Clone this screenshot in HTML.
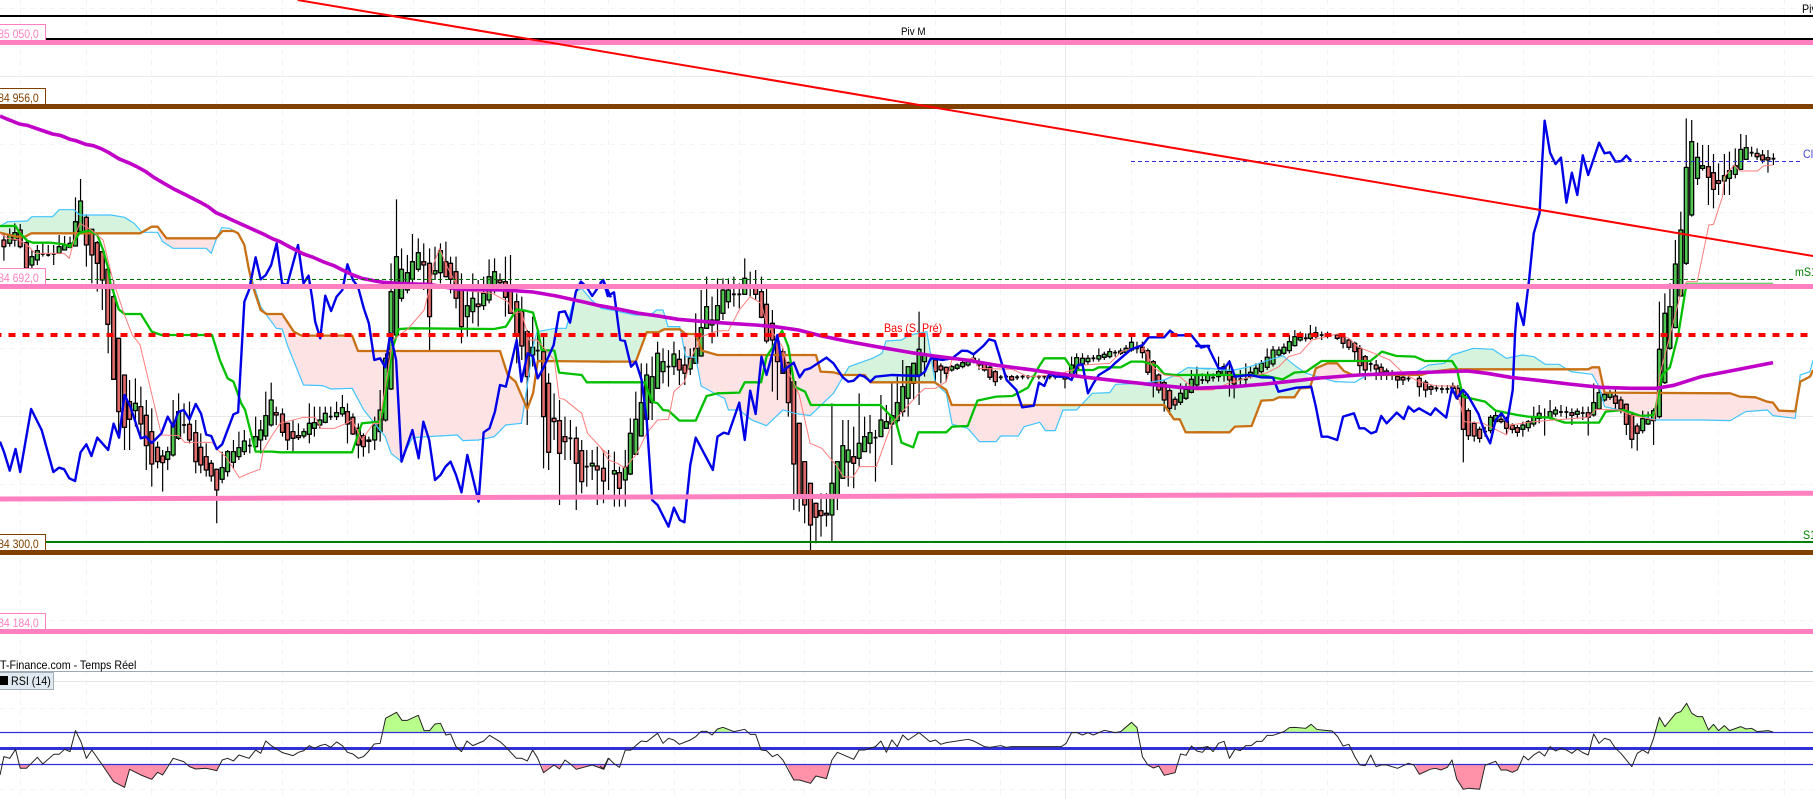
<!DOCTYPE html>
<html><head><meta charset="utf-8"><title>Chart</title>
<style>
html,body{margin:0;padding:0;background:#fff;width:1813px;height:799px;overflow:hidden}
#c{position:relative;width:1813px;height:799px;overflow:hidden;font-family:"Liberation Sans",sans-serif}
svg{position:absolute;left:0;top:0}
path,polyline,polygon{vector-effect:non-scaling-stroke;fill:none;stroke-linejoin:round}
.fg polygon{stroke:none;fill:#d6f3de}
.fp polygon{stroke:none;fill:#fde3e3}
.w{stroke:#000;stroke-width:1.2}
.d{stroke:#000;stroke-width:1.8}
.bg{fill:#50c850!important;stroke:#000;stroke-width:1.3}
.br{fill:#e46c6c!important;stroke:#000;stroke-width:1.3}
.lb{stroke:#40c4ff;stroke-width:1.2}
.or{stroke:#c87014;stroke-width:2.3}
.gr{stroke:#00c000;stroke-width:2.3}
.sa{stroke:#ff7c7c;stroke-width:1}
.bl{stroke:#0000e8;stroke-width:2.4}
.ma{stroke:#c000c8;stroke-width:3.6}
.rs{stroke:#222;stroke-width:1}
.rg polygon{stroke:none;fill:#b9ff8c}
.rp polygon{stroke:none;fill:#ff92a8}
.l{position:absolute;white-space:nowrap;line-height:14px;font-size:12px;transform:scaleX(.89);transform-origin:0 0}
.b{position:absolute;left:-2px;width:46px;height:15px;background:#fff;border:1px solid;box-sizing:content-box;overflow:hidden}
.b span{position:absolute;right:6px;top:2px;font-size:12px;line-height:14px;white-space:nowrap;transform:scaleX(.87);transform-origin:100% 0}
</style></head><body><div id="c">
<svg width="1813" height="799" viewBox="0 0 1813 799" xmlns="http://www.w3.org/2000/svg">
<!-- grid -->
<g stroke="#f3f3f3" stroke-width="1" stroke-dasharray="5 5" fill="none">
<line x1="20.5" y1="0" x2="20.5" y2="799"/><line x1="86.5" y1="0" x2="86.5" y2="799"/><line x1="151.5" y1="0" x2="151.5" y2="799"/><line x1="216.5" y1="0" x2="216.5" y2="799"/><line x1="282.5" y1="0" x2="282.5" y2="799"/><line x1="347.5" y1="0" x2="347.5" y2="799"/><line x1="413.5" y1="0" x2="413.5" y2="799"/><line x1="478.5" y1="0" x2="478.5" y2="799"/><line x1="544.5" y1="0" x2="544.5" y2="799"/><line x1="608.5" y1="0" x2="608.5" y2="799"/><line x1="674.5" y1="0" x2="674.5" y2="799"/><line x1="739.5" y1="0" x2="739.5" y2="799"/><line x1="804.5" y1="0" x2="804.5" y2="799"/><line x1="869.5" y1="0" x2="869.5" y2="799"/><line x1="935.5" y1="0" x2="935.5" y2="799"/><line x1="1000.5" y1="0" x2="1000.5" y2="799"/><line x1="1131.5" y1="0" x2="1131.5" y2="799"/><line x1="1197.5" y1="0" x2="1197.5" y2="799"/><line x1="1261.5" y1="0" x2="1261.5" y2="799"/><line x1="1327.5" y1="0" x2="1327.5" y2="799"/><line x1="1393.5" y1="0" x2="1393.5" y2="799"/><line x1="1458.5" y1="0" x2="1458.5" y2="799"/><line x1="1523.5" y1="0" x2="1523.5" y2="799"/><line x1="1589.5" y1="0" x2="1589.5" y2="799"/><line x1="1653.5" y1="0" x2="1653.5" y2="799"/><line x1="1718.5" y1="0" x2="1718.5" y2="799"/><line x1="1784.5" y1="0" x2="1784.5" y2="799"/>
<line x1="0" y1="8.5" x2="1813" y2="8.5"/><line x1="0" y1="144.5" x2="1813" y2="144.5"/><line x1="0" y1="212.5" x2="1813" y2="212.5"/><line x1="0" y1="348.5" x2="1813" y2="348.5"/><line x1="0" y1="484.5" x2="1813" y2="484.5"/><line x1="0" y1="620.5" x2="1813" y2="620.5"/><line x1="0" y1="708.5" x2="1813" y2="708.5"/><line x1="0" y1="789.5" x2="1813" y2="789.5"/>
</g>
<g stroke="#e8e8e8" stroke-width="1"><line x1="0" y1="76.5" x2="1813" y2="76.5"/><line x1="0" y1="416.5" x2="1813" y2="416.5"/><line x1="0" y1="681.5" x2="1813" y2="681.5"/><line x1="1065.5" y1="0" x2="1065.5" y2="799"/></g>
<line x1="0" y1="671.5" x2="1813" y2="671.5" stroke="#a0a8b0" stroke-width="1"/>

<!-- fills -->
<g transform="translate(0 260) scale(.3891 .3333)">
<g class="fg"><polygon points="0,-102 20,-115 70,-117 82,-130 135,-130 152,-151 190,-151 205,-135 285,-135 320,-128 345,-110 362,-82 80,-80 65,-70 40,-70 0,-82"/>
<polygon points="1370,260 1380,215 1428,205 1455,205 1480,95 1495,85 1520,120 1545,145 1568,150 1568,305 1382,303"/></g>
<g class="fp"><polygon points="405,-100 428,-65 555,-65 543,-20 530,-35 445,-35 418,-55 405,-83"/>
<polygon points="685,162 725,162 755,215 775,227 905,227 920,273 1285,273 1305,345 1325,365 1352,440 1340,490 1300,495 1270,530 1230,540 1190,542 1175,525 1100,530 1060,533 1030,603 1005,580 990,530 935,450 905,385 850,387 830,377 780,375 740,260 725,207 710,205"/></g>
</g>
<g transform="translate(600 260) scale(.3891 .3333)">
<g class="fg"><polygon points="0,143 90,165 130,165 145,150 162,150 175,200 205,200 205,208 165,208 150,217 120,217 92,305 0,305"/>
<polygon points="624,345 640,320 700,295 725,280 735,243 775,240 795,225 840,215 862,370 695,367 680,345"/>
<polygon points="1190,450 1225,450 1265,400 1310,398 1325,373 1395,370 1450,360 1480,345 1510,323 1568,327 1568,517 1505,517 1490,478 1475,478 1450,435 1170,435"/></g>
<g class="fp"><polygon points="205,208 220,222 246,222 262,272 302,285 555,285 567,335 600,337 624,345 600,400 540,467 500,460 470,450 428,497 390,480 358,450 330,450 320,415 302,405 260,378 246,292 220,290 205,200"/>
<polygon points="862,367 890,390 904,435 1170,435 1190,450 1170,512 1145,512 1130,487 1090,500 1075,528 1030,528 1018,545 975,545 945,505 905,493 890,400"/></g>
</g>
<g transform="translate(1203 260) scale(.3891 .3333)">
<g class="fg"><polygon points="-20,325 20,325 50,330 80,330 120,320 170,300 205,287 240,320 265,340 278,380 250,385 235,412 195,412 180,420 150,422 125,498 82,500 68,517 -20,517"/>
<polygon points="560,345 580,315 620,310 640,285 695,265 745,268 780,295 820,285 850,290 880,313 915,313 945,335 990,328 640,328 590,335"/></g>
<g class="fp"><polygon points="280,365 290,325 320,310 345,310 362,333 385,345 340,365 300,352"/>
<polygon points="990,328 1000,322 1018,322 1032,398 1355,400 1380,410 1420,412 1450,425 1465,428 1480,452 1522,454 1522,475 1465,467 1450,450 1395,455 1355,482 1165,480 1130,470 1080,452 1032,440 1018,380 1000,343"/></g>
</g>

<!-- candles A -->
<g transform="translate(0 260) scale(.3891 .3333)">
<path class="w" d="M10-80V2M25-95V-40M38-110V-40M52-108V-35M68-65V40M82-30V30M96-45V15M110-50V-10M124-45V-10M138-45V15M152-75V-18M166-72V-30M180-70V-35M194-188V-42M207-243V-85M222-137V20M236-90V70M250-57V95M263-25V150M278 25V280M292 60V360M305 235V520M320 345V570M333 360V570M348 355V500M362 380V535M376 420V630M390 445V680M405 545V625M418 570V695M431 560V630M445 420V590M459 400V540M473 430V520M487 425V550M503 480V640M516 520V640M530 550V650M543 600V665M557 628V790M571 575V670M585 570V650M600 540V625M614 515V600M628 510V585M642 535V580M657 470V565M670 480V580M683 395V540M697 368V500M710 440V495M726 445V530M739 505V570M753 480V575M767 490V540M781 505V535M795 430V550M808 440V530M822 440V505M836 440V490M850 440V480M865 425V480M880 405V470M893 430V550M907 460V525M921 490V595M934 520V590M948 530V580M963 470V570M977 390V545M991 280V485M1005 10V390M1019-182V230M1032-35V125M1047-15V100M1060-78V70M1075-65V35M1089-50V90M1104-35V270M1118-40V60M1132-50V70M1146-55V30M1158-10V100M1172-10V145M1186 40V250M1201 90V230M1215 40V190M1229 60V200M1243 50V150M1257-2V130M1271-5V100M1285 40V80M1299-10V170M1312-15V160M1328 100V310M1341 110V300M1355 210V495M1369 170V320M1382 210V300M1397 230V625M1410 340V630M1424 400V540M1438 420V735M1452 470V600M1466 480V600M1481 500V750M1495 540V700M1508 570V680M1522 570V660M1535 560V735"/>
<path class="d" d="M105-18h10M119-15h10M133-18h10M468 495h10M637 557h10M845 470h10M1377 272h10M1461 535h10M1503 620h10"/>
<path class="bg" d="M20-75h10V-50h-10zM33-82h10V-60h-10zM77-10h10V15h-10zM91-28h10V0h-10zM147-40h10V-20h-10zM161-45h10V-30h-10zM175-50h10V-38h-10zM189-115h10V-42h-10zM202-177h10V-85h-10zM343 430h10V452h-10zM426 575h10V598h-10zM440 490h10V585h-10zM454 455h10V535h-10zM566 623h10V658h-10zM580 575h10V635h-10zM595 575h10V607h-10zM609 563h10V590h-10zM623 543h10V575h-10zM652 530h10V560h-10zM665 510h10V540h-10zM678 467h10V528h-10zM692 420h10V495h-10zM776 515h10V528h-10zM790 490h10V523h-10zM803 488h10V505h-10zM817 480h10V495h-10zM831 460h10V487h-10zM860 458h10V470h-10zM875 443h10V462h-10zM943 540h10V544h-10zM958 495h10V540h-10zM972 450h10V515h-10zM986 295h10V480h-10zM1000 95h10V387h-10zM1014-10h10V225h-10zM1027 28h10V115h-10zM1042 38h10V90h-10zM1055 5h10V58h-10zM1070-22h10V28h-10zM1113 32h10V42h-10zM1127-28h10V38h-10zM1196 137h10V170h-10zM1210 115h10V155h-10zM1238 100h10V137h-10zM1252 50h10V120h-10zM1266 35h10V85h-10zM1364 262h10V285h-10zM1517 610h10V618h-10z"/>
<path class="br" d="M5-60h10V-40h-10zM47-90h10V-40h-10zM63-52h10V25h-10zM217-128h10V-45h-10zM231-92h10V-15h-10zM245-52h10V10h-10zM258-25h10V60h-10zM272 28h10V193h-10zM287 110h10V358h-10zM300 235h10V455h-10zM315 345h10V502h-10zM328 425h10V478h-10zM357 440h10V492h-10zM371 466h10V557h-10zM385 515h10V612h-10zM400 562h10V605h-10zM413 588h10V608h-10zM482 493h10V540h-10zM498 518h10V605h-10zM511 562h10V615h-10zM525 590h10V630h-10zM538 610h10V648h-10zM552 628h10V690h-10zM705 458h10V465h-10zM721 462h10V517h-10zM734 490h10V540h-10zM748 515h10V535h-10zM762 527h10V533h-10zM888 455h10V492h-10zM902 472h10V522h-10zM916 505h10V555h-10zM929 527h10V560h-10zM1084 5h10V15h-10zM1099 10h10V170h-10zM1141 5h10V50h-10zM1153 10h10V58h-10zM1167 35h10V115h-10zM1181 90h10V200h-10zM1224 132h10V140h-10zM1280 60h10V68h-10zM1294 65h10V112h-10zM1307 90h10V160h-10zM1323 125h10V225h-10zM1336 155h10V258h-10zM1350 215h10V350h-10zM1392 275h10V470h-10zM1405 370h10V577h-10zM1419 475h10V485h-10zM1433 482h10V580h-10zM1447 530h10V545h-10zM1476 535h10V610h-10zM1490 572h10V665h-10zM1530 618h10V630h-10z"/>
</g>
<!-- candles B -->
<g transform="translate(600 260) scale(.3891 .3333)">
<path class="w" d="M9 570V730M22 570V690M37 575V740M50 620V740M65 570V740M78 475V645M92 395V585M106 310V530M120 310V480M134 290V480M148 245V385M162 265V370M176 270V380M190 245V345M204 270V375M218 260V375M232 265V345M246 160V310M260 90V290M274 50V205M288 110V250M302 55V230M316 55V180M330 55V145M344 50V140M358 70V145M372-5V105M386 35V110M400 30V120M415 50V175M428 85V250M443 150V395M456 240V420M470 265V340M484 305V470M498 365V750M512 490V755M526 605V790M541 670V870M555 730V850M568 700V830M582 700V800M596 430V845M610 605V750M624 480V655M638 480V680M652 500V685M666 400V620M680 470V575M694 465V580M708 510V665M722 405V530M736 435V505M750 365V615M764 350V490M778 300V470M792 320V470M806 310V420M820 155V435M834 220V350M862 295V365M876 310V370M890 320V365M904 315V335M918 310V330M932 300V325M946 295V320M960 285V310M974 295V330M988 305V335M1002 315V360M1016 330V378M1030 345V360M1044 343V358M1058 345V362M1072 345V360M1086 345V358M1100 345V358M1114 345V358M1128 345V358M1142 345V358M1156 345V358M1170 345V358M1195 338V385M1212 290V360M1225 280V345M1240 280V320M1254 285V315M1268 285V305M1282 265V305M1296 275V300M1310 265V295M1324 270V290M1338 265V285M1352 255V280M1366 230V275M1380 245V280M1394 245V295M1408 265V345M1422 300V412M1436 340V400M1450 360V455M1464 385V465M1478 410V450M1492 370V435M1506 370V420M1520 330V400M1534 320V380M1548 340V372"/>
<path class="d" d="M171 320h10M339 103h10M353 103h10M703 533h10M1025 352h10M1039 350h10M1067 352h10M1081 350h10M1095 350h10M1109 350h10M1123 350h10M1137 350h10M1151 350h10M1165 350h10M1263 295h10M1319 278h10M1375 265h10M1543 360h10"/>
<path class="bg" d="M32 632h10V642h-10zM60 622h10V660h-10zM73 520h10V642h-10zM87 478h10V583h-10zM101 428h10V528h-10zM115 345h10V478h-10zM129 350h10V428h-10zM143 280h10V385h-10zM157 305h10V335h-10zM185 282h10V320h-10zM227 295h10V327h-10zM241 265h10V310h-10zM255 203h10V288h-10zM269 140h10V205h-10zM283 180h10V195h-10zM297 137h10V180h-10zM311 90h10V160h-10zM325 90h10V125h-10zM367 55h10V103h-10zM591 670h10V765h-10zM605 605h10V705h-10zM619 557h10V655h-10zM633 570h10V606h-10zM661 550h10V595h-10zM675 530h10V575h-10zM689 518h10V550h-10zM717 480h10V530h-10zM731 485h10V505h-10zM745 467h10V492h-10zM759 428h10V482h-10zM773 380h10V455h-10zM787 320h10V415h-10zM801 310h10V370h-10zM815 268h10V345h-10zM829 282h10V305h-10zM899 320h10V330h-10zM913 315h10V325h-10zM927 308h10V320h-10zM941 305h10V315h-10zM1207 315h10V345h-10zM1220 293h10V330h-10zM1235 295h10V312h-10zM1249 295h10V305h-10zM1277 287h10V297h-10zM1291 283h10V292h-10zM1305 275h10V290h-10zM1333 273h10V280h-10zM1347 265h10V277h-10zM1361 247h10V270h-10zM1487 400h10V427h-10zM1501 388h10V415h-10zM1515 358h10V397h-10zM1529 345h10V375h-10z"/>
<path class="br" d="M4 625h10V663h-10zM45 638h10V685h-10zM199 298h10V330h-10zM213 315h10V340h-10zM395 85h10V103h-10zM410 95h10V172h-10zM423 133h10V243h-10zM438 190h10V240h-10zM451 245h10V305h-10zM465 275h10V340h-10zM479 308h10V428h-10zM493 365h10V612h-10zM507 490h10V705h-10zM521 605h10V735h-10zM536 670h10V795h-10zM550 730h10V772h-10zM563 752h10V767h-10zM577 760h10V765h-10zM647 590h10V610h-10zM857 300h10V335h-10zM871 318h10V330h-10zM885 322h10V340h-10zM955 295h10V305h-10zM969 305h10V315h-10zM983 312h10V330h-10zM997 322h10V352h-10zM1011 335h10V365h-10zM1053 350h10V360h-10zM1190 345h10V357h-10zM1389 262h10V278h-10zM1403 272h10V337h-10zM1417 305h10V370h-10zM1431 345h10V390h-10zM1445 368h10V420h-10zM1459 392h10V445h-10zM1473 418h10V435h-10z"/>
</g>
<!-- candles C -->
<g transform="translate(1203 260) scale(.3891 .3333)">
<path class="w" d="M12 335V370M26 340V365M40 290V365M54 310V365M68 300V410M80 340V415M96 330V375M110 310V375M122 320V355M136 310V350M150 300V340M165 265V330M180 258V320M195 260V290M208 250V285M222 225V280M236 210V260M250 215V245M264 220V245M276 195V240M290 200V235M305 215V240M320 215V235M345 222V240M360 222V265M375 235V270M390 245V300M403 255V345M417 285V360M431 300V335M445 300V360M458 310V360M472 325V360M486 330V360M500 340V385M514 340V375M528 345V365M556 345V410M572 360V412M586 375V405M600 375V395M614 375V400M628 375V400M642 368V400M655 375V420M669 395V607M682 445V540M697 485V545M711 500V548M725 500V530M739 465V520M752 455V490M766 455V490M780 470V525M795 490V520M808 495V530M822 485V530M836 480V515M850 440V500M864 435V490M878 445V527M892 420V478M906 440V470M920 435V470M934 440V475M948 445V495M962 445V475M976 440V480M990 440V527M1004 370V470M1018 385V450M1032 395V425M1046 390V420M1060 385V450M1074 410V460M1088 430V525M1102 455V565M1116 490V572M1130 452V520M1144 455V495M1158 445V555M1173 125V475M1187 100V372M1200 70V270M1214-60V205M1228-145V110M1242-425V15M1256-420V-130M1271-352V-225M1284-345V-268M1299-345V-165M1312-318V-155M1325-290V-195M1340-318V-195M1353-325V-195M1368-335V-245M1382-378V-270M1396-375V-300M1410-340V-310M1424-335V-300M1438-330V-290M1452-330V-262M1466-320V-285"/>
<path class="d" d="M21 353h10M91 358h10M105 358h10M259 235h10M300 225h10M315 225h10M426 312h10M481 342h10M523 356h10M595 385h10M609 387h10M623 387h10M720 515h10M873 472h10M915 456h10M929 456h10M971 459h10M1405-322h10M1461-304h10"/>
<path class="bg" d="M7 345h10V362h-10zM35 335h10V350h-10zM49 320h10V345h-10zM117 337h10V350h-10zM131 325h10V345h-10zM145 310h10V335h-10zM160 292h10V322h-10zM175 270h10V312h-10zM190 270h10V285h-10zM203 262h10V280h-10zM217 245h10V272h-10zM231 230h10V257h-10zM245 232h10V240h-10zM271 222h10V235h-10zM734 472h10V512h-10zM747 467h10V485h-10zM817 495h10V508h-10zM831 485h10V503h-10zM845 472h10V492h-10zM859 460h10V475h-10zM887 455h10V473h-10zM901 450h10V462h-10zM957 454h10V463h-10zM999 428h10V465h-10zM1013 398h10V447h-10zM1027 403h10V420h-10zM1041 398h10V412h-10zM1125 476h10V512h-10zM1139 478h10V492h-10zM1153 452h10V482h-10zM1168 268h10V470h-10zM1182 160h10V368h-10zM1195 140h10V265h-10zM1209 12h10V203h-10zM1223-90h10V108h-10zM1237-278h10V10h-10zM1251-355h10V-135h-10zM1266-308h10V-245h-10zM1279-283h10V-275h-10zM1335-253h10V-237h-10zM1348-268h10V-245h-10zM1363-283h10V-257h-10zM1377-332h10V-272h-10zM1391-337h10V-302h-10z"/>
<path class="br" d="M63 335h10V360h-10zM75 350h10V372h-10zM285 218h10V230h-10zM340 225h10V235h-10zM355 230h10V250h-10zM370 240h10V262h-10zM385 250h10V275h-10zM398 265h10V317h-10zM412 290h10V330h-10zM440 315h10V327h-10zM453 322h10V338h-10zM467 333h10V342h-10zM495 350h10V360h-10zM509 352h10V360h-10zM551 355h10V380h-10zM567 367h10V390h-10zM581 380h10V388h-10zM637 378h10V385h-10zM650 385h10V410h-10zM664 405h10V508h-10zM677 452h10V527h-10zM692 490h10V528h-10zM706 508h10V535h-10zM761 478h10V485h-10zM775 483h10V505h-10zM790 495h10V508h-10zM803 503h10V517h-10zM943 458h10V466h-10zM985 458h10V472h-10zM1055 408h10V430h-10zM1069 420h10V447h-10zM1083 433h10V493h-10zM1097 465h10V538h-10zM1111 498h10V520h-10zM1294-280h10V-248h-10zM1307-262h10V-212h-10zM1320-238h10V-230h-10zM1419-320h10V-310h-10zM1433-315h10V-300h-10zM1447-307h10V-300h-10z"/>
</g>

<!-- indicator lines A -->
<g transform="translate(0 260) scale(.3891 .3333)">
<polyline class="lb" points="0,-102 20,-115 70,-117 82,-130 135,-130 152,-151 190,-151 205,-135 285,-135 320,-128 345,-110 365,-83 405,-83 418,-55 445,-35 530,-35 543,-20 555,-60 570,-97 590,-95 612,-80 628,-45 640,30 670,140 685,165 710,205 725,207 740,260 780,375 830,377 850,387 905,385 935,450 990,530 1005,580 1030,603 1060,533 1100,530 1175,525 1190,542 1230,540 1270,530 1300,495 1340,490 1352,400 1370,260 1380,215 1428,205 1455,205 1480,95 1495,85 1520,120 1545,145 1570,150"/>
<polyline class="or" points="0,-82 40,-70 65,-70 80,-80 360,-80 390,-100 405,-100 428,-65 555,-65 572,-87 600,-87 612,-80 628,-45 640,30 650,80 670,150 685,162 725,162 755,215 775,227 905,227 920,273 1285,273 1305,345 1325,365 1355,447 1370,400 1382,303 1570,305"/>
<polyline class="gr" points="0,-102 40,-102 50,-82 70,-58 85,-52 130,-52 165,-47 180,-40 195,-65 205,-82 230,-88 250,-75 265,-30 278,25 285,80 290,90 305,148 320,162 362,162 390,215 415,225 545,225 565,300 585,355 600,365 620,430 630,450 657,575 700,575 720,577 905,577 930,490 975,485 985,450 1000,330 1010,260 1025,207 1060,205 1270,207 1300,200 1328,148 1350,152 1370,158 1382,210 1392,270 1425,272 1437,338 1495,345 1508,367 1570,367"/>
<polyline class="sa" points="0,-80 20,-65 50,-60 70,-45 90,-20 165,-20 178,-5 195,-80 205,-110 235,-90 265,-60 290,60 320,165 340,225 360,255 415,525 460,527 475,547 545,547 560,570 580,590 615,653 640,640 668,628 677,570 700,525 720,490 780,472 810,472 825,505 860,505 890,490 905,480 930,540 960,490 975,490 1010,240 1050,205 1090,150 1105,80 1115,10 1130,-35 1145,10 1180,90 1265,100 1305,125 1320,160 1340,155 1360,240 1380,240 1395,260 1425,300 1437,415 1450,418 1495,460 1510,520 1550,570 1570,590"/>
<polyline class="bl" points="0,545 10,575 25,632 40,567 52,636 80,447 107,510 137,636 152,623 165,628 178,655 193,663 207,577 222,553 235,588 250,533 278,570 292,491 306,533 320,405 335,440 362,535 375,530 390,549 415,520 431,470 445,500 458,456 472,450 487,478 503,432 517,462 530,524 543,528 557,567 571,553 600,463 612,457 628,125 640,90 657,-8 670,58 683,45 697,15 711,-50 725,70 738,75 766,-45 780,70 793,47 803,120 810,185 823,235 836,107 851,153 865,110 880,90 893,13 907,60 920,80 935,145 948,190 962,300 977,295 990,322 1003,220 1018,300 1032,605 1060,510 1076,595 1088,485 1103,540 1118,660 1132,645 1145,620 1158,605 1172,645 1186,697 1201,585 1230,725 1243,517 1258,505 1272,455 1285,375 1300,380 1318,290 1328,240 1340,365 1356,280 1370,290 1382,355 1396,325 1423,255 1437,157 1452,154 1465,188 1480,95 1493,65 1507,80 1522,108 1550,60 1570,112"/>
<polyline class="ma" points="0,-432 20,-422 50,-408 70,-404 105,-390 135,-378 155,-374 180,-362 195,-358 220,-347 240,-343 260,-334 280,-322 305,-304 330,-292 350,-281 375,-265 395,-248 420,-231 450,-211 480,-194 515,-173 535,-160 555,-142 575,-132 600,-118 640,-97 680,-76 700,-64 720,-55 745,-39 780,-18 805,-8 830,5 860,18 880,30 905,44 930,55 960,62 985,67 1020,70 1060,72 1100,73 1180,88 1300,90 1370,96 1430,108 1500,126 1570,145"/>
</g>
<!-- indicator lines B -->
<g transform="translate(600 260) scale(.3891 .3333)">
<polyline class="lb" points="0,143 90,165 130,165 145,150 162,150 175,200 205,200 220,290 246,292 260,378 302,405 320,415 330,450 358,450 390,480 428,497 470,450 500,460 540,467 600,400 640,320 700,295 725,280 735,243 775,240 795,225 840,215 862,370 890,400 905,493 945,505 975,545 1018,545 1030,528 1075,528 1090,500 1130,487 1145,512 1170,512 1190,450 1225,450 1265,400 1310,398 1325,373 1395,370 1450,360 1480,345 1510,323 1568,327"/>
<polyline class="or" points="0,305 92,305 120,217 150,217 165,208 205,208 220,222 246,222 262,272 302,285 555,285 567,335 600,337 624,345 680,345 695,367 860,367 890,390 904,435 1450,435 1475,478 1490,478 1505,517 1568,517"/>
<polyline class="gr" points="0,367 115,367 134,425 148,430 162,450 176,452 204,482 246,482 274,408 302,400 358,398 372,367 414,367 428,290 442,265 468,212 484,260 500,380 527,395 542,435 720,435 760,483 775,548 805,562 818,517 890,517 905,500 945,498 970,422 1018,410 1060,408 1100,383 1128,320 1142,295 1195,295 1215,330 1225,330 1268,330 1282,322 1338,322 1365,305 1395,305 1432,318 1450,342 1480,345 1568,345"/>
<polyline class="sa" points="0,560 22,600 45,610 64,625 95,580 120,520 148,480 176,478 190,395 218,365 232,300 260,230 302,213 330,212 358,150 386,110 414,130 428,190 470,262 484,335 512,405 540,550 570,565 610,620 625,650 650,652 667,620 710,620 750,490 820,400 835,385 862,385 890,365 904,300 960,295 975,325 1060,328 1100,350 1170,345 1215,330 1240,315 1310,310 1340,275 1395,255 1420,320 1450,345 1490,350 1530,390 1568,390"/>
<polyline class="bl" points="0,70 8,60 20,108 36,97 52,240 64,243 80,320 92,305 107,360 120,480 134,720 148,735 176,800 190,743 205,780 217,787 232,615 246,533 290,630 302,530 318,518 330,522 358,428 372,540 386,392 400,462 415,290 428,345 456,225 470,335 484,320 498,308 513,352 526,330 540,325 582,293 600,310 624,352 638,365 652,362 667,345 680,350 695,365 708,350 750,345 820,348 835,335 850,295 880,300 905,295 930,272 945,273 960,283 985,258 1000,238 1015,243 1030,300 1045,360 1070,390 1085,442 1115,437 1128,368 1142,378 1155,340 1170,350 1198,350 1212,360 1228,315 1240,313 1254,400 1268,370 1282,345 1310,325 1325,308 1365,268 1395,255 1410,232 1450,232 1465,212 1480,226 1520,226 1545,263 1560,258 1568,258"/>
<polyline class="ma" points="0,137 50,148 100,160 150,168 200,178 260,184 330,190 400,195 450,200 510,210 570,228 640,245 720,262 800,278 860,288 940,300 1020,316 1100,328 1170,340 1250,352 1340,364 1420,374 1500,383 1552,385"/>
</g>
<!-- indicator lines C -->
<g transform="translate(1203 260) scale(.3891 .3333)">
<polyline class="lb" points="-20,325 20,325 50,330 80,330 120,320 170,300 205,287 240,320 265,340 300,352 340,365 390,367 430,340 545,338 580,315 620,310 640,285 695,265 745,268 780,295 820,285 850,290 880,313 915,313 945,335 1000,343 1018,380 1032,440 1080,452 1130,470 1165,480 1250,480 1280,480 1355,482 1395,455 1450,450 1465,467 1522,475 1535,345 1560,335 1568,300"/>
<polyline class="or" points="-20,517 68,517 82,500 125,498 150,422 180,420 195,412 235,412 250,385 275,383 290,325 320,310 345,310 362,333 385,345 560,345 590,335 640,328 990,328 1000,322 1018,322 1032,398 1355,400 1380,410 1420,412 1450,425 1465,428 1480,452 1522,454 1535,365 1560,350 1568,330"/>
<polyline class="gr" points="-20,345 150,345 205,358 235,338 265,335 290,315 305,303 430,303 460,275 497,288 545,290 570,303 640,303 652,325 668,410 725,425 752,452 808,465 835,470 890,473 930,488 1018,488 1035,455 1080,450 1125,468 1160,465 1180,345 1200,322 1222,220 1240,90 1245,70"/>
<polyline points="1245,70 1465,70" stroke="#70d070" stroke-width="1.4"/>
<polyline class="sa" points="-20,390 25,390 65,370 110,355 165,338 195,320 220,290 250,280 280,240 345,222 375,235 400,262 440,280 480,300 515,340 555,365 600,378 650,378 672,485 720,490 780,525 790,495 850,485 990,472 1010,448 1070,450 1100,465 1160,480 1175,340 1230,90 1243,65 1270,65 1280,10 1300,-105 1312,-107 1335,-190 1340,-250 1365,-285 1380,-267 1425,-267 1440,-282 1465,-285"/>
<polyline class="bl" points="-20,258 12,258 40,325 55,325 68,305 82,350 120,345 150,352 180,353 194,395 240,383 278,380 290,440 305,530 320,530 345,540 360,470 388,460 402,505 415,505 432,520 445,515 458,468 472,490 498,458 516,477 528,440 542,455 555,445 585,465 597,445 625,473 640,385 652,415 668,390 680,405 708,462 725,520 738,550 752,480 767,460 782,485 796,390 802,220 808,130 824,195 832,115 838,60 850,-80 865,-140 872,-300 878,-418 892,-322 906,-288 920,-307 934,-172 948,-262 962,-195 976,-314 990,-255 1018,-352 1032,-320 1046,-323 1060,-295 1075,-297 1088,-313 1100,-298"/>
<polyline class="ma" points="-20,385 80,380 160,372 240,362 300,354 400,345 500,340 600,336 680,333 730,340 790,352 860,361 940,372 1020,382 1100,385 1165,385 1210,376 1280,350 1360,332 1465,308"/>
</g>

<!-- horizontals -->
<line x1="46" y1="279.5" x2="1795" y2="279.5" stroke="#007000" stroke-width="1" stroke-dasharray="4 3"/>
<line x1="1131" y1="161.5" x2="1802" y2="161.5" stroke="#3030d8" stroke-width="1" stroke-dasharray="4 3"/>
<line x1="-5.5" y1="335" x2="1813" y2="335" stroke="#f00" stroke-width="4" stroke-dasharray="7 7"/>
<line x1="0" y1="16" x2="1813" y2="16" stroke="#000" stroke-width="2"/>
<line x1="0" y1="39" x2="1813" y2="39" stroke="#000" stroke-width="2"/>
<line x1="0" y1="42.5" x2="1813" y2="42.5" stroke="#ff80c0" stroke-width="5"/>
<line x1="0" y1="106.5" x2="1813" y2="106.5" stroke="#804000" stroke-width="5"/>
<line x1="0" y1="286.5" x2="1813" y2="286.5" stroke="#ff80c0" stroke-width="5"/>
<line x1="0" y1="499" x2="1813" y2="493.3" stroke="#ff80c0" stroke-width="5"/>
<line x1="46" y1="542" x2="1813" y2="542" stroke="#008000" stroke-width="2"/>
<line x1="0" y1="552.5" x2="1813" y2="552.5" stroke="#804000" stroke-width="5"/>
<line x1="0" y1="631.5" x2="1813" y2="631.5" stroke="#ff80c0" stroke-width="5"/>
<line x1="297.7" y1="0" x2="1813" y2="256" stroke="#f00" stroke-width="2"/>

<!-- RSI -->
<g transform="translate(0 540) scale(.3891 .3333)">
<g class="rg"><polygon points="985,577 991,535 1019,517 1033,541 1047,541 1075,526 1090,572 1104,572 1118,552 1132,550 1140,577"/></g>
<g class="rp"><polygon points="50,673 52,685 68,685 78,673"/><polygon points="262,673 292,725 320,742 333,688 362,705 390,718 405,697 418,705 432,673"/><polygon points="480,673 487,680 503,687 530,685 557,692 563,673"/><polygon points="1392,673 1397,698 1424,675 1438,687 1447,673"/><polygon points="1470,673 1481,688 1522,675 1550,687 1556,673"/></g>
</g>
<g transform="translate(600 540) scale(.3891 .3333)">
<g class="rg"><polygon points="296,577 302,567 316,562 340,577"/><polygon points="1330,577 1338,575 1366,547 1380,563 1384,577"/></g>
<g class="rp"><polygon points="0,673 0,678 10,688 16,673"/><polygon points="480,673 498,720 512,720 541,730 555,708 582,716 592,673"/><polygon points="1410,673 1422,684 1436,678 1450,706 1478,698 1484,673"/></g>
</g>
<g transform="translate(1203 540) scale(.3891 .3333)">
<g class="rg"><polygon points="208,577 222,563 236,562 264,565 278,553 292,568 305,570 332,573 338,577"/><polygon points="1163,577 1173,532 1187,560 1215,520 1228,515 1243,490 1256,520 1271,530 1284,530 1299,570 1312,553 1325,572 1340,557 1353,572 1382,560 1396,567 1410,565 1424,575 1452,572 1465,576 1465,577"/></g>
<g class="rp"><polygon points="545,673 556,703 584,688 597,685 612,690 628,682 636,673"/><polygon points="646,673 652,717 669,748 682,745 711,748 725,676 726,673"/><polygon points="755,673 766,690 780,690 795,697 808,690 812,673"/></g>
</g>
<g stroke="#3030d8" fill="none"><line x1="0" y1="732.5" x2="1813" y2="732.5" stroke-width="1.2"/><line x1="0" y1="748.5" x2="1813" y2="748.5" stroke-width="3"/><line x1="0" y1="764.5" x2="1813" y2="764.5" stroke-width="1.2"/></g>
<g transform="translate(0 540) scale(.3891 .3333)">
<polyline class="rs" points="0,705 10,650 25,655 40,628 52,685 68,685 96,652 110,672 138,643 152,643 166,628 180,635 194,572 208,605 222,655 236,630 263,675 292,725 320,742 333,688 362,705 390,718 405,697 418,705 445,655 472,665 487,680 503,687 530,685 557,692 571,660 585,655 600,663 614,645 640,655 657,630 670,640 683,603 697,617 726,638 753,647 767,637 781,632 795,617 808,625 822,617 836,613 850,622 865,606 880,617 893,637 907,642 921,655 934,650 948,633 962,612 977,610 991,535 1019,517 1033,541 1047,541 1075,526 1090,572 1104,572 1118,552 1132,550 1146,585 1158,582 1172,620 1186,635 1200,603 1215,617 1243,603 1258,586 1285,605 1299,620 1327,655 1341,655 1355,663 1369,630 1382,655 1397,698 1424,675 1438,687 1452,660 1466,672 1481,688 1522,675 1550,687 1563,655 1568,658"/>
</g>
<g transform="translate(600 540) scale(.3891 .3333)">
<polyline class="rs" points="0,678 10,688 22,655 37,672 50,682 65,630 78,631 106,603 120,605 148,580 162,610 176,595 190,600 204,613 232,600 246,590 260,574 274,574 288,585 302,567 316,562 344,575 372,568 386,583 400,583 414,630 428,632 443,650 456,643 470,660 498,720 512,720 541,730 555,708 582,716 596,660 610,637 652,658 666,630 680,630 708,620 722,603 736,637 750,600 764,620 778,585 792,600 820,578 848,605 862,600 876,613 890,608 946,598 960,603 988,620 1002,622 1030,617 1044,622 1058,620 1186,620 1198,610 1212,578 1226,578 1240,585 1254,578 1268,585 1296,571 1324,578 1338,575 1366,547 1380,563 1394,650 1408,675 1422,684 1436,678 1450,706 1478,698 1492,642 1506,646 1520,618 1534,633 1548,637 1562,620 1568,625"/>
</g>
<g transform="translate(1203 540) scale(.3891 .3333)">
<polyline class="rs" points="-15,625 12,620 26,635 40,610 54,604 68,655 82,628 96,632 110,617 124,617 138,604 152,604 165,586 180,586 208,575 222,563 236,562 264,565 278,553 292,568 305,570 332,573 346,590 360,618 375,613 390,650 403,675 417,677 431,645 445,680 458,675 472,675 500,685 528,670 542,675 556,703 584,688 597,685 612,690 628,682 640,660 652,717 669,748 682,745 711,748 725,676 752,664 766,690 780,690 795,697 808,690 824,648 836,660 850,645 864,635 878,648 892,620 906,633 920,625 934,630 948,640 962,627 976,638 990,645 1004,582 1018,610 1032,595 1046,600 1060,625 1074,640 1102,680 1116,640 1130,630 1144,640 1158,595 1173,532 1187,560 1215,520 1228,515 1243,490 1256,520 1271,530 1284,530 1299,570 1312,553 1325,572 1340,557 1353,572 1382,560 1396,567 1410,565 1424,575 1452,572 1465,576"/>
</g>
</svg>

<div class="b" style="top:24px;border-color:#ff80c0"><span style="color:#ff80c0">85 050,0</span></div>
<div class="b" style="top:88px;border-color:#804000"><span style="color:#804000">84 956,0</span></div>
<div class="b" style="top:268px;border-color:#ff80c0"><span style="color:#ff80c0">84 692,0</span></div>
<div class="b" style="top:534px;border-color:#804000"><span style="color:#804000">84 300,0</span></div>
<div class="b" style="top:613px;border-color:#ff80c0"><span style="color:#ff80c0">84 184,0</span></div>

<div class="l" style="left:901px;top:25px;font-size:11px;color:#000">Piv M</div>
<div class="l" style="left:1802px;top:2px;font-size:12px;color:#000">Piv</div>
<div class="l" style="left:1803px;top:147px;font-size:12px;color:#4848e0">Cl</div>
<div class="l" style="left:1795px;top:265px;font-size:12px;color:#008000">mS1</div>
<div class="l" style="left:1803px;top:528px;font-size:12px;color:#008000">S1</div>
<div class="l" style="left:884px;top:321px;font-size:12px;color:#f00">Bas (S. Pré)</div>
<div class="l" style="left:0;top:658px;font-size:12px;color:#000">T-Finance.com - Temps Réel</div>
<div style="position:absolute;left:-2px;top:672px;width:54px;height:16px;background:#e0e9ef;border:1px solid #a4aeb8;box-sizing:content-box"></div>
<div style="position:absolute;left:0;top:676px;width:8px;height:9px;background:#000"></div>
<div class="l" style="left:11px;top:674px;font-size:12px;color:#000">RSI (14)</div>
</div></body></html>
